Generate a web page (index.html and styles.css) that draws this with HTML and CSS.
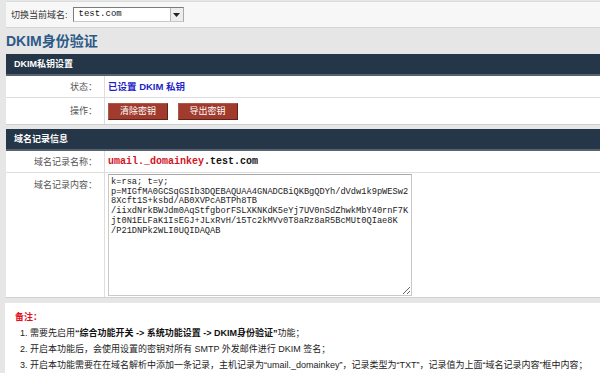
FILE: index.html
```html
<!DOCTYPE html>
<html lang="zh-CN">
<head>
    <meta charset="UTF-8">
    <title>DKIM身份验证</title>
    <link rel="stylesheet" href="styles.css">
</head>
<body>
    <div class="topbar">
        <span class="topbar-label">切换当前域名:</span>
        <div class="fake-select">
            <span class="fake-select-text">test.com</span>
            <span class="fake-select-arrow">
                <svg width="7" height="4" viewBox="0 0 7 4"><path d="M0 0 H7 L3.5 4 Z" fill="#222"/></svg>
            </span>
        </div>
    </div>

    <h1 class="title">DKIM身份验证</h1>

    <div class="panel panel-key">
        <div class="panel-head">DKIM私钥设置</div>
        <table class="form-table">
            <tr class="row-status">
                <td class="label">状态：</td>
                <td class="value"><span class="status-ok">已设置 DKIM 私钥</span></td>
            </tr>
            <tr class="row-actions">
                <td class="label">操作：</td>
                <td class="value">
                    <button class="btn">清除密钥</button>
                    <button class="btn">导出密钥</button>
                </td>
            </tr>
        </table>
    </div>

    <div class="panel">
        <div class="panel-head">域名记录信息</div>
        <table class="form-table">
            <tr class="row-name">
                <td class="label">域名记录名称：</td>
                <td class="value"><span class="record-name"><span class="record-host">umail._domainkey</span>.test.com</span></td>
            </tr>
            <tr class="row-content">
                <td class="label label-top">域名记录内容：</td>
                <td class="value">
<textarea class="record-box" readonly>k=rsa; t=y;
p=MIGfMA0GCSqGSIb3DQEBAQUAA4GNADCBiQKBgQDYh/dVdw1k9pWESw2
8Xcft1S+ksbd/AB0XVPcABTPh8TB
/iixdNrkBWJdm0AqStfgborFSLXKNKdK5eYj7UV0nSdZhwkMbY40rnF7K
jt0N1ELFaK1IsEGJ+JLxRvH/15Tc2kMVv0T8aRz8aR5BcMUt0QIae8K
/P21DNPk2WLI0UQIDAQAB</textarea>
                </td>
            </tr>
        </table>
    </div>

    <div class="notes">
        <div class="notes-title">备注：</div>
        <ol class="notes-list">
            <li>1. 需要先启用<b>“综合功能开关 -&gt; 系统功能设置 -&gt; DKIM身份验证”</b>功能；</li>
            <li>2. 开启本功能后，会使用设置的密钥对所有 SMTP 外发邮件进行 DKIM 签名；</li>
            <li>3. 开启本功能需要在在域名解析中添加一条记录，主机记录为“umail._domainkey”，记录类型为“TXT”，记录值为上面“域名记录内容”框中内容；</li>
        </ol>
    </div>
</body>
</html>
```

FILE: styles.css
```css
body {
    margin: 0;
    padding: 1px 0 0 6px;
    background-color: #e6e6e6;
    font-family: "Liberation Sans", "Noto Sans CJK SC", sans-serif;
    font-size: 9px;
    line-height: 12px;
    color: #333;
    overflow: hidden;
}
.topbar {
    display: flex;
    align-items: center;
    height: 25px;
    padding-left: 5px;
    background-color: #f7f7f7;
    border-top: 1px solid #dcdcdc;
    border-bottom: 1px solid #d4d4d4;
}
.topbar-label {
    margin-right: 5px;
    color: #333;
}
.fake-select {
    display: flex;
    align-items: stretch;
    width: 111px;
    height: 15px;
    box-sizing: border-box;
    border: 1px solid #7b7b7b;
    border-right-color: #a9a9a9;
    border-bottom-color: #c8c8c8;
    background-color: #fff;
}
.fake-select-text {
    flex: 1;
    padding-left: 5px;
    font-family: "Liberation Mono", monospace;
    font-size: 9px;
    line-height: 13px;
    color: #111;
}
.fake-select-arrow {
    display: flex;
    align-items: center;
    justify-content: center;
    width: 12px;
    background-color: #ededed;
    border-left: 1px solid #b5b5b5;
}
.title {
    margin: 0;
    height: 26px;
    line-height: 26px;
    font-size: 14px;
    font-weight: bold;
    color: #2c5987;
}
.panel {
    background-color: #fff;
    margin-bottom: 5px;
}
.panel-key {
    margin-bottom: 4px;
}
.panel-head {
    height: 20px;
    line-height: 20px;
    padding-left: 8px;
    background-color: #243647;
    border-bottom: 2px solid #56636f;
    color: #fff;
    font-weight: bold;
}
.form-table {
    width: 100%;
    border-collapse: collapse;
}
.form-table td {
    padding: 0;
    border-bottom: 1px solid #dedede;
}
.form-table tr:last-child td {
    border-bottom-color: #d0d0d0;
}
.label {
    width: 91px;
    padding-right: 7px !important;
    text-align: right;
    color: #555;
    border-right: 1px solid #dedede;
}
.label-top {
    vertical-align: top;
    padding-top: 6px !important;
}
.value {
    padding-left: 3px !important;
}
.row-status td {
    height: 21px;
}
.row-actions td {
    height: 26px;
}
.row-name td {
    height: 21px;
}
.status-ok {
    color: #1f1fc8;
    font-weight: bold;
    font-size: 9.5px;
}
.btn {
    width: 60px;
    height: 17px;
    margin: 0 5px 0 0;
    padding: 0;
    background-color: #a13b2d;
    border: 1px solid #5e2219;
    border-top-color: #b0584b;
    border-left-color: #b0584b;
    color: #fff;
    font-family: "Liberation Sans", "Noto Sans CJK SC", sans-serif;
    font-size: 9px;
    line-height: 12px;
    vertical-align: middle;
}
.btn + .btn {
    margin-left: 2px;
}
.record-name {
    font-family: "Liberation Mono", monospace;
    font-size: 10px;
    font-weight: bold;
    color: #111;
}
.record-host {
    color: #d2141e;
}
.row-content .value {
    vertical-align: top;
    padding-top: 1px !important;
    padding-bottom: 1px !important;
}
.record-box {
    display: block;
    width: 304px;
    height: 122px;
    box-sizing: border-box;
    margin: 0;
    padding: 3px 2px;
    border: 1px solid #c9c9c9;
    border-top-color: #a8a8a8;
    font-family: "Liberation Mono", monospace;
    font-size: 8.7px;
    line-height: 9.7px;
    color: #222;
    white-space: pre;
    overflow: hidden;
}
.notes {
    margin-left: -1px;
    padding: 6px 0 12px 10px;
    background-color: #fff;
}
.notes-title {
    line-height: 16px;
    color: #e3101c;
    font-weight: bold;
}
.notes-list {
    list-style: none;
    margin: 0;
    padding: 0 0 0 5px;
}
.notes-list li {
    line-height: 16px;
    color: #222;
    white-space: nowrap;
}
.notes-list b {
    color: #111;
}
```
